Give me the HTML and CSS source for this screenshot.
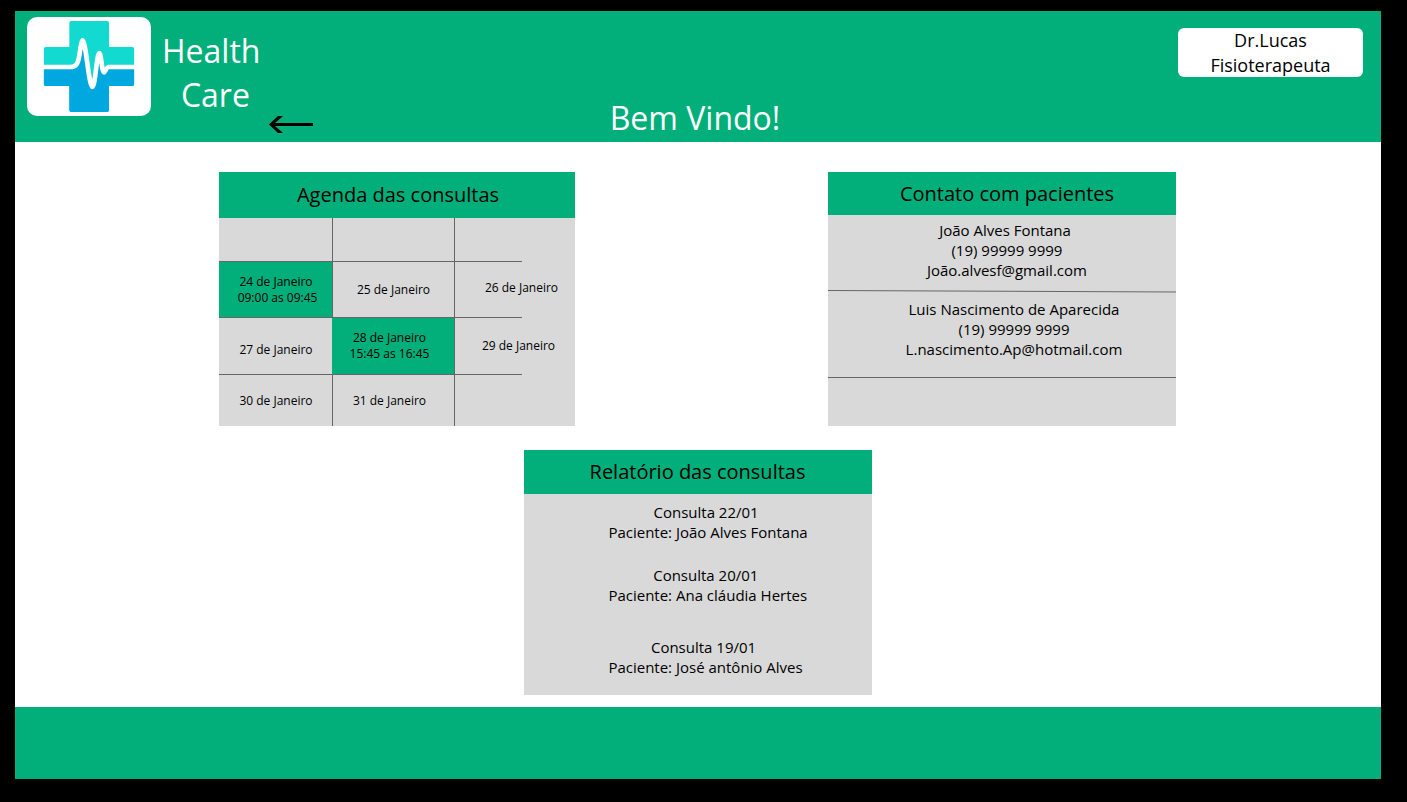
FILE: index.html
```html
<!DOCTYPE html>
<html lang="pt-BR">
<head>
<meta charset="utf-8">
<title>Health Care</title>
<link rel="stylesheet" href="styles.css">
</head>
<body>
<header class="header">
  <div class="header-start">
    <div class="logo">
      <svg viewBox="0 0 372 297" role="img" aria-label="Health Care">
        <defs>
          <clipPath id="cross">
            <path d="M133 12H240Q246 12 246 18V90H316Q322 90 322 96V201Q322 207 316 207H246V279Q246 285 240 285H133Q127 285 127 279V207H56Q50 207 50 201V96Q50 90 56 90H127V18Q127 12 133 12Z"/>
          </clipPath>
        </defs>
        <g clip-path="url(#cross)">
          <rect width="372" height="297" fill="#13dad0"/>
          <path d="M40 150H130C148 150 153 140 157 115C161 88 164 70 167 70C176 70 186 210 196 210C205 210 209 108 217 108C223 108 224 166 231 166C236 166 236 150 246 150H340V300H40Z" fill="#00a8e0"/>
        </g>
        <path d="M46 150H130C148 150 153 140 157 115C161 88 164 70 167 70C176 70 186 210 196 210C205 210 209 108 217 108C223 108 224 166 231 166C236 166 236 150 246 150H326" fill="none" stroke="#fff" stroke-width="14" stroke-linejoin="round"/>
      </svg>
    </div>
    <p class="brand">Health<br>&nbsp;Care</p>
    <button class="back" type="button" aria-label="Voltar">
      <svg viewBox="0 0 44 18" width="44" height="18"><path d="M9 1H14L6 8H44V11H6L14 18H9L0 9.500Z" fill="#000"/></svg>
    </button>
  </div>
  <h1 class="welcome">Bem Vindo!</h1>
  <div class="user">Dr.Lucas<br>Fisioterapeuta</div>
</header>

<main class="main">
  <div class="row">
    <table class="card agenda">
      <caption class="card-title">Agenda das consultas</caption>
      <tbody>
        <tr class="blank"><td></td><td></td><td></td></tr>
        <tr class="early"><td class="booked">24 de Janeiro<br>&nbsp;09:00 as 09:45</td><td>25 de Janeiro</td><td>26 de Janeiro</td></tr>
        <tr class="shifted"><td class="low">27 de Janeiro</td><td class="booked">28 de Janeiro<br>15:45 as 16:45</td><td>29 de Janeiro</td></tr>
        <tr class="shifted last"><td>30 de Janeiro</td><td>31 de Janeiro</td><td></td></tr>
      </tbody>
    </table>

    <section class="card contacts">
      <h2 class="card-title">Contato com pacientes</h2>
      <address class="contact">João Alves Fontana<br>&nbsp;(19) 99999 9999<br>&nbsp;<a href="mailto:João.alvesf@gmail.com">João.alvesf@gmail.com</a></address>
      <svg class="divider" viewBox="0 0 348 3" preserveAspectRatio="none"><path d="M0 .5L348 2" stroke="#666" stroke-width="1"/></svg>
      <address class="contact wide">Luis Nascimento de Aparecida<br>(19) 99999 9999<br><a href="mailto:L.nascimento.Ap@hotmail.com">L.nascimento.Ap@hotmail.com</a></address>
      <div class="contact-blank"></div>
    </section>
  </div>

  <section class="card reports">
    <h2 class="card-title">Relatório das consultas</h2>
    <ul class="report-list">
      <li>Consulta 22/01<br>&nbsp;Paciente: João Alves Fontana</li>
      <li>Consulta 20/01<br>&nbsp;Paciente: Ana cláudia Hertes</li>
      <li>Consulta 19/01<br>&nbsp;Paciente: José antônio Alves</li>
    </ul>
  </section>
</main>
<footer class="footer"></footer>
</body>
</html>
```
FILE: styles.css
```css
* { box-sizing: border-box; }

html { background: #000; }

body {
  margin: 0;
  min-height: 100vh;
  padding: 11px 26px 23px 15px;
  display: flex;
  flex-direction: column;
  background: #000;
  color: #000;
  font-family: "Open Sans", "Noto Sans", sans-serif;
  font-size: 15px;
  line-height: 20px;
}

h1, h2, p, ul { margin: 0; padding: 0; font-weight: 400; }

.header {
  display: grid;
  grid-template-columns: 1fr auto 1fr;
  padding: 6px 18px 0 12px;
  min-height: 131px;
  background: #02ae79;
}

.header-start { display: flex; align-items: flex-start; }

.logo {
  width: 124px;
  height: 99px;
  border-radius: 10px;
  background: #fff;
}
.logo svg { display: block; width: 100%; height: 100%; }

.brand {
  margin: 12px 0 0 11px;
  color: #fff;
  font-size: 32px;
  line-height: 44px;
  text-align: center;
}

.back {
  align-self: flex-end;
  margin: 0 0 9px 9px;
  padding: 0;
  border: 0;
  background: none;
  cursor: pointer;
}
.back svg { display: block; }

.welcome {
  align-self: end;
  padding-bottom: 2px;
  color: #fff;
  font-size: 32px;
  line-height: 44px;
}

.user {
  justify-self: end;
  align-self: start;
  width: 185px;
  height: 49px;
  margin-top: 11px;
  border-radius: 6px;
  background: #fff;
  font-size: 18px;
  line-height: 25px;
  text-align: center;
}

.main {
  flex: 1;
  display: flex;
  flex-direction: column;
  align-items: center;
  gap: 24px;
  padding: 30px 205px 12px 204px;
  background: #fff;
}

.row {
  align-self: stretch;
  display: flex;
  justify-content: space-between;
  gap: 24px;
}

.card {
  width: 348px;
  background: #d9d9d9;
  text-align: center;
}

.card-title {
  padding: 8px 0;
  background: #02ae79;
  font-size: 20px;
  line-height: 28px;
}

.agenda {
  width: 356px;
  border-collapse: separate;
  border-spacing: 0;
  table-layout: fixed;
  font-size: 12px;
  line-height: 16px;
}
.agenda .card-title { padding: 9px 0 9px 2px; }
.agenda td {
  height: 57px;
  padding: 0;
  border-right: 1px solid #666;
  border-bottom: 1px solid #666;
}
.agenda td:first-child { width: 114px; padding-left: 1px; }
.agenda td:nth-child(2) { width: 122px; }
.agenda td:last-child {
  padding-left: 13px;
  border: 0;
  background: linear-gradient(#666, #666) left bottom / 67px 1px no-repeat;
}
.agenda .blank td { height: 44px; }
.agenda .early td { height: 56px; }
.agenda .early td:last-child { padding-bottom: 4px; }
.agenda .shifted td:nth-child(2) { padding-right: 8px; }
.agenda .shifted td:last-child { padding: 0 0 2px 7px; }
.agenda .last td { height: 51px; border-bottom: 0; }
.agenda .last td:last-child { background: none; }
.agenda .booked { background: #02ae79; }
.agenda .low { padding-top: 8px; border-right-color: #02ae79; }

.contacts .card-title { padding: 8px 0 7px 10px; }
.contact {
  padding: 5px 0 10px 6px;
  font-style: normal;
}
.contact.wide {
  padding: 6px 0 18px 24px;
  border-bottom: 1px solid #666;
}
.contact a { color: inherit; text-decoration: none; }
.divider { display: block; width: 100%; height: 3px; }
.contact-blank { height: 48px; }

.report-list {
  width: fit-content;
  margin-left: 81px;
  padding: 8px 0 18px;
  list-style: none;
}
.report-list li { width: fit-content; }
.report-list li + li { margin-top: 23px; }
.report-list li:last-child { margin-top: 32px; }

.footer { min-height: 72px; background: #02ae79; }
```
